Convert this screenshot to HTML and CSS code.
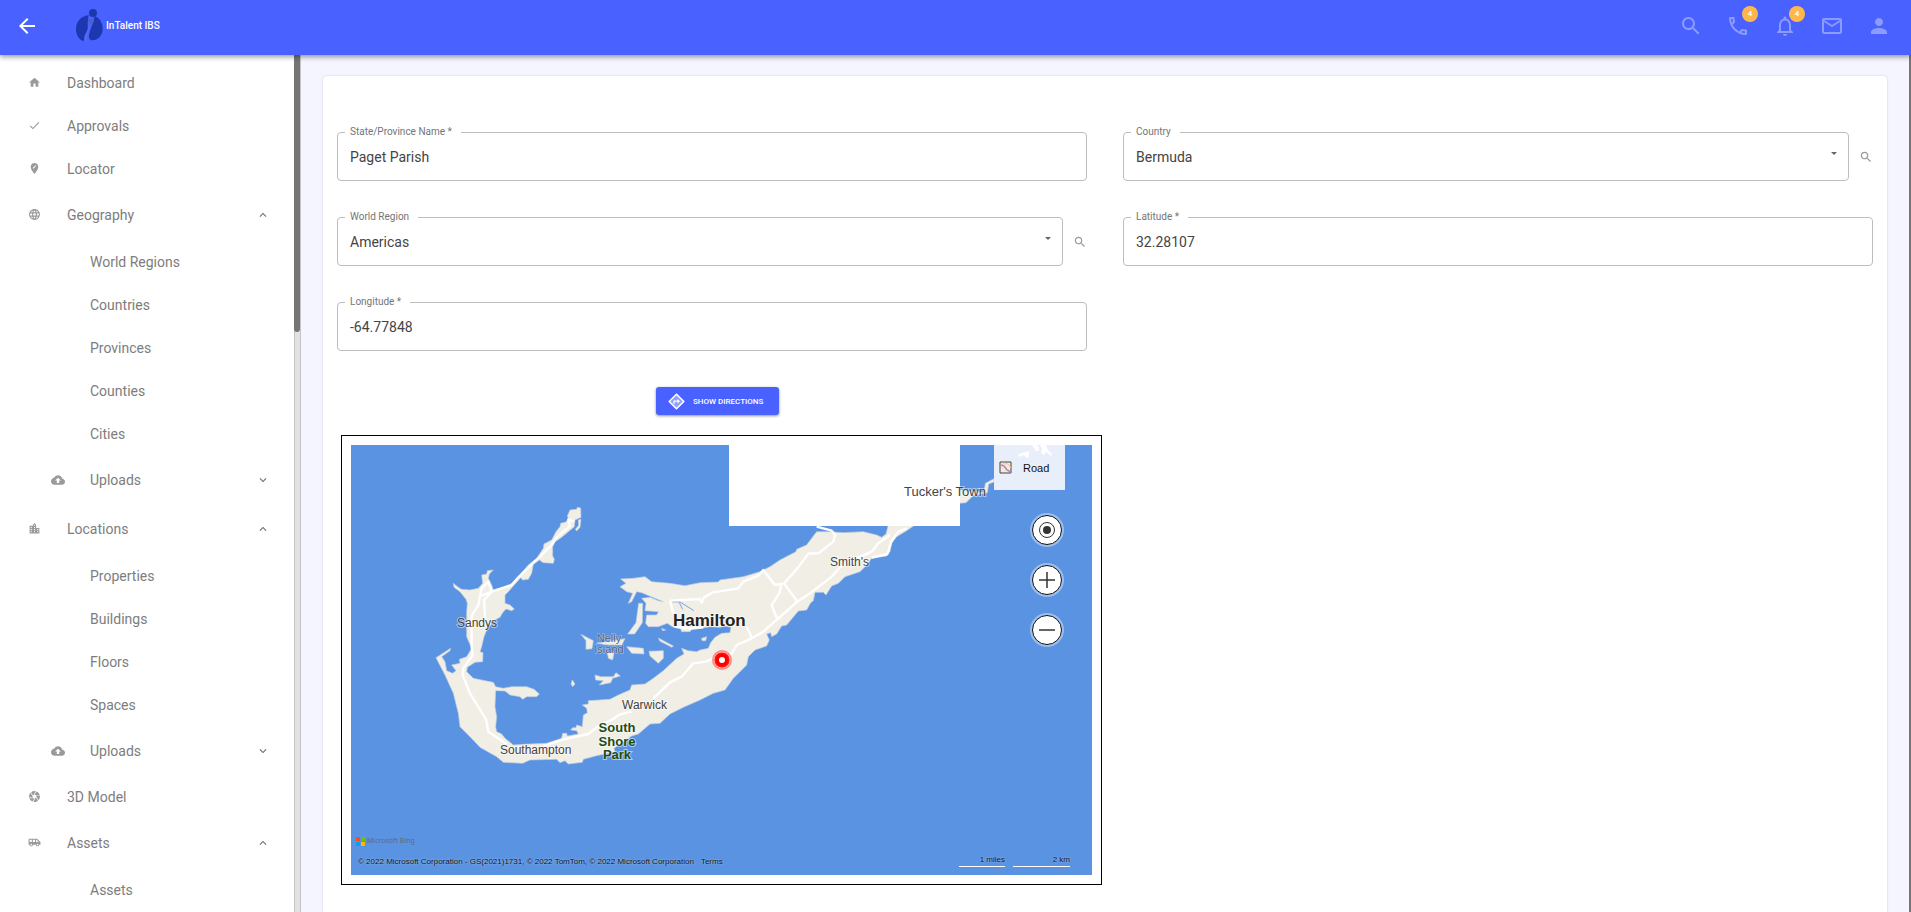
FILE: index.html
```html
<!DOCTYPE html>
<html lang="en">
<head>
<meta charset="utf-8">
<title>InTalent IBS</title>
<link rel="stylesheet" href="styles.css">
</head>
<body>
<svg class="sprite" aria-hidden="true">
  <symbol id="home" viewBox="0 0 24 24"><path d="M10 20v-6h4v6h5v-8h3L12 3 2 12h3v8z"/></symbol>
  <symbol id="check" viewBox="0 0 24 24"><path d="M9 16.17L4.83 12l-1.42 1.41L9 19 21 7l-1.41-1.41z"/></symbol>
  <symbol id="pin" viewBox="0 0 24 24"><path d="M12 2C8.14 2 5 5.14 5 9c0 5.25 7 13 7 13s7-7.75 7-13c0-3.86-3.14-7-7-7zm-1.56 10H9v-1.44l3.35-3.34 1.43 1.43L10.44 12zm4.45-4.45l-.7.7-1.44-1.44.7-.7c.15-.15.39-.15.54 0l.9.9c.15.15.15.39 0 .54z"/></symbol>
  <symbol id="globe" viewBox="0 0 24 24"><path d="M11.99 2C6.47 2 2 6.48 2 12s4.47 10 9.99 10C17.52 22 22 17.52 22 12S17.52 2 11.99 2zm6.93 6h-2.95c-.32-1.25-.78-2.45-1.38-3.56 1.84.63 3.37 1.91 4.33 3.56zM12 4.04c.83 1.2 1.48 2.53 1.91 3.96h-3.82c.43-1.43 1.08-2.76 1.91-3.96zM4.26 14C4.1 13.36 4 12.69 4 12s.1-1.36.26-2h3.38c-.08.66-.14 1.32-.14 2 0 .68.06 1.34.14 2H4.26zm.82 2h2.95c.32 1.25.78 2.45 1.38 3.56-1.84-.63-3.37-1.9-4.33-3.56zm2.95-8H5.08c.96-1.66 2.49-2.93 4.33-3.56C8.81 5.55 8.35 6.75 8.03 8zM12 19.96c-.83-1.2-1.48-2.53-1.91-3.96h3.82c-.43 1.43-1.08 2.76-1.91 3.96zM14.34 14H9.66c-.09-.66-.16-1.32-.16-2 0-.68.07-1.35.16-2h4.68c.09.65.16 1.32.16 2 0 .68-.07 1.34-.16 2zm.25 5.56c.6-1.11 1.06-2.31 1.38-3.56h2.95c-.96 1.65-2.49 2.93-4.33 3.56zM16.36 14c.08-.66.14-1.32.14-2 0-.68-.06-1.34-.14-2h3.38c.16.64.26 1.31.26 2s-.1 1.36-.26 2h-3.38z"/></symbol>
  <symbol id="cloud" viewBox="0 0 24 24"><path d="M19.35 10.04C18.67 6.59 15.64 4 12 4 9.11 4 6.6 5.64 5.35 8.04 2.34 8.36 0 10.91 0 14c0 3.31 2.69 6 6 6h13c2.76 0 5-2.24 5-5 0-2.64-2.05-4.78-4.65-4.96zM14 13v4h-4v-4H7l5-5 5 5h-3z"/></symbol>
  <symbol id="city" viewBox="0 0 24 24"><path d="M15 11V5l-3-3-3 3v2H3v14h18V11h-6zm-8 8H5v-2h2v2zm0-4H5v-2h2v2zm0-4H5V9h2v2zm6 8h-2v-2h2v2zm0-4h-2v-2h2v2zm0-4h-2V9h2v2zm0-4h-2V5h2v2zm6 12h-2v-2h2v2zm0-4h-2v-2h2v2z"/></symbol>
  <symbol id="camera" viewBox="0 0 24 24"><path d="M9.4 10.5l4.77-8.26C13.47 2.09 12.75 2 12 2c-2.4 0-4.6.85-6.32 2.25l3.66 6.35.06-.1zM21.54 9c-.92-2.92-3.15-5.26-6-6.34L11.88 9h9.66zm.26 1h-7.49l.29.5 4.76 8.25C21 16.97 22 14.61 22 12c0-.69-.07-1.35-.2-2zM8.54 12l-3.9-6.75C3.01 7.03 2 9.39 2 12c0 .69.07 1.35.2 2h7.49l-1.15-2zm-6.08 3c.92 2.92 3.15 5.26 6 6.34L12.12 15H2.46zm11.27 0l-3.9 6.76c.7.15 1.42.24 2.17.24 2.4 0 4.6-.85 6.32-2.25l-3.66-6.35-.93 1.6z"/></symbol>
  <symbol id="shuttle" viewBox="0 0 24 24"><path d="M17 5H3c-1.1 0-2 .89-2 2v9h2c0 1.65 1.34 3 3 3s3-1.35 3-3h5.5c0 1.65 1.34 3 3 3s3-1.35 3-3H23v-5l-6-6zM3 11V7h4v4H3zm3 6.5c-.83 0-1.5-.67-1.5-1.5s.67-1.5 1.5-1.5 1.5.67 1.5 1.5-.67 1.5-1.5 1.5zm7-6.5H9V7h4v4zm4.5 6.5c-.83 0-1.5-.67-1.5-1.5s.67-1.5 1.5-1.5 1.5.67 1.5 1.5-.67 1.5-1.5 1.5zM15 11V7h1l4 4h-5z"/></symbol>
  <symbol id="less" viewBox="0 0 24 24"><path d="M12 8l-6 6 1.41 1.41L12 10.83l4.59 4.58L18 14z"/></symbol>
  <symbol id="more" viewBox="0 0 24 24"><path d="M16.59 8.59L12 13.17 7.41 8.59 6 10l6 6 6-6z"/></symbol>
  <symbol id="search" viewBox="0 0 24 24"><path d="M15.5 14h-.79l-.28-.27C15.41 12.59 16 11.11 16 9.5 16 5.91 13.09 3 9.5 3S3 5.91 3 9.5 5.91 16 9.5 16c1.61 0 3.09-.59 4.23-1.57l.27.28v.79l5 4.99L20.49 19l-4.99-5zm-6 0C7.01 14 5 11.99 5 9.5S7.01 5 9.5 5 14 7.01 14 9.5 11.99 14 9.5 14z"/></symbol>
  <symbol id="phone" viewBox="0 0 24 24"><path d="M6.54 5c.06.89.21 1.76.45 2.59l-1.2 1.2c-.41-1.2-.67-2.47-.76-3.79h1.51m9.86 12.02c.85.24 1.72.39 2.6.45v1.49c-1.32-.09-2.59-.35-3.8-.75l1.2-1.19M7.5 3H4c-.55 0-1 .45-1 1 0 9.39 7.61 17 17 17 .55 0 1-.45 1-1v-3.49c0-.55-.45-1-1-1-1.24 0-2.45-.2-3.57-.57-.1-.04-.21-.05-.31-.05-.26 0-.51.1-.71.29l-2.2 2.2c-2.83-1.45-5.15-3.76-6.59-6.59l2.2-2.2c.28-.28.36-.67.25-1.02C8.7 6.45 8.5 5.25 8.5 4c0-.55-.45-1-1-1z"/></symbol>
  <symbol id="bell" viewBox="0 0 24 24"><path d="M12 22c1.1 0 2-.9 2-2h-4c0 1.1.9 2 2 2zm6-6v-5c0-3.07-1.63-5.64-4.5-6.32V4c0-.83-.67-1.5-1.5-1.5s-1.5.67-1.5 1.5v.68C7.64 5.36 6 7.92 6 11v5l-2 2v1h16v-1l-2-2zm-2 1H8v-6c0-2.48 1.51-4.5 4-4.5s4 2.02 4 4.5v6z"/></symbol>
  <symbol id="mail" viewBox="0 0 24 24"><path d="M22 6c0-1.1-.9-2-2-2H4c-1.1 0-2 .9-2 2v12c0 1.1.9 2 2 2h16c1.1 0 2-.9 2-2V6zm-2 0l-8 5-8-5h16zm0 12H4V8l8 5 8-5v10z"/></symbol>
  <symbol id="person" viewBox="0 0 24 24"><path d="M12 12c2.21 0 4-1.79 4-4s-1.79-4-4-4-4 1.79-4 4 1.79 4 4 4zm0 2c-2.67 0-8 1.34-8 4v2h16v-2c0-2.66-5.33-4-8-4z"/></symbol>
  <symbol id="back" viewBox="0 0 24 24"><path d="M20 11H7.83l5.59-5.59L12 4l-8 8 8 8 1.41-1.41L7.83 13H20v-2z"/></symbol>
</svg>

<header class="topbar">
  <button class="icon-btn back" type="button" aria-label="Back"><svg><use href="#back"/></svg></button>
  <a class="brand" href="#">
    <svg class="logo" viewBox="0 0 81 99" aria-hidden="true">
      <circle cx="51" cy="12" r="12" fill="#1c37b0"/>
      <path d="M38 18C14 22 0 38 0 60c0 18 9 31 22 37 6-12 12-22 13-34 1-12-1-20 1-32z" fill="#1c37b0"/>
      <path d="M55 21c16 5 25 20 25 38 0 20-13 34-31 35-10-1-12-10-9-20 4-18 13-30 15-53z" fill="#1c37b0"/>
      <path d="M36 31h19c-2 8-5 14-8 18-4-4-8-8-11-18z" fill="#5261b8"/>
      <path d="M36 48c3 15-8 25-11 36-1 6 2 10 8 15-1-8-3-16 1-24 5-9 6-18 2-27z" fill="#5a6ff0"/>
    </svg>
    <span>InTalent IBS</span>
  </a>
  <nav class="tools" aria-label="Tools">
    <button class="icon-btn" type="button" aria-label="Search"><svg><use href="#search"/></svg></button>
    <button class="icon-btn" type="button" aria-label="Calls"><svg><use href="#phone"/></svg><span class="badge">4</span></button>
    <button class="icon-btn" type="button" aria-label="Notifications"><svg><use href="#bell"/></svg><span class="badge">4</span></button>
    <button class="icon-btn" type="button" aria-label="Mail"><svg><use href="#mail"/></svg></button>
    <button class="icon-btn" type="button" aria-label="Account"><svg><use href="#person"/></svg></button>
  </nav>
</header>

<div class="shell">
  <div class="sidebar">
    <nav class="menu" aria-label="Main">
      <a class="item" href="#"><svg class="ico"><use href="#home"/></svg>Dashboard</a>
      <a class="item" href="#"><svg class="ico"><use href="#check"/></svg>Approvals</a>
      <a class="item" href="#"><svg class="ico"><use href="#pin"/></svg>Locator</a>
      <button class="item group" type="button" aria-expanded="true"><svg class="ico"><use href="#globe"/></svg>Geography<svg class="chev"><use href="#less"/></svg></button>
      <div class="sub">
        <a class="item" href="#">World Regions</a>
        <a class="item" href="#">Countries</a>
        <a class="item" href="#">Provinces</a>
        <a class="item" href="#">Counties</a>
        <a class="item" href="#">Cities</a>
        <button class="item group" type="button" aria-expanded="false"><svg class="ico"><use href="#cloud"/></svg>Uploads<svg class="chev"><use href="#more"/></svg></button>
      </div>
      <button class="item group" type="button" aria-expanded="true"><svg class="ico"><use href="#city"/></svg>Locations<svg class="chev"><use href="#less"/></svg></button>
      <div class="sub">
        <a class="item" href="#">Properties</a>
        <a class="item" href="#">Buildings</a>
        <a class="item" href="#">Floors</a>
        <a class="item" href="#">Spaces</a>
        <button class="item group" type="button" aria-expanded="false"><svg class="ico"><use href="#cloud"/></svg>Uploads<svg class="chev"><use href="#more"/></svg></button>
      </div>
      <a class="item" href="#"><svg class="ico"><use href="#camera"/></svg>3D Model</a>
      <button class="item group" type="button" aria-expanded="true"><svg class="ico"><use href="#shuttle"/></svg>Assets<svg class="chev"><use href="#less"/></svg></button>
      <div class="sub">
        <a class="item" href="#">Assets</a>
      </div>
    </nav>
    <div class="track"><div class="thumb"></div></div>
  </div>

  <main class="content">
    <form class="card">
      <div class="fields">
        <div class="row"><div class="field"><input id="state" value="Paget Parish"><label for="state">State/Province Name *</label></div></div>
        <div class="row">
          <div class="field"><select id="country"><option>Bermuda</option></select><label for="country">Country</label><svg class="caret" viewBox="0 0 6 3"><path d="M0 0h6L3 3z"/></svg></div>
          <button class="lookup" type="button" aria-label="Look up country"><svg><use href="#search"/></svg></button>
        </div>
        <div class="row">
          <div class="field"><select id="region"><option>Americas</option></select><label for="region">World Region</label><svg class="caret" viewBox="0 0 6 3"><path d="M0 0h6L3 3z"/></svg></div>
          <button class="lookup" type="button" aria-label="Look up world region"><svg><use href="#search"/></svg></button>
        </div>
        <div class="row"><div class="field"><input id="lat" value="32.28107"><label for="lat">Latitude *</label></div></div>
        <div class="row"><div class="field"><input id="lng" value="-64.77848"><label for="lng">Longitude *</label></div></div>
      </div>

      <section class="map-panel">
        <div class="actions">
          <button class="directions" type="button">
            <svg viewBox="0 0 17 17" aria-hidden="true"><path d="M8.500 1.200 15.800 8.500 8.500 15.800 1.200 8.500z" fill="#8f9eff" stroke="#fff" stroke-width="1.600" stroke-linejoin="round"/><path d="M6 11V8.200h4" fill="none" stroke="#fff" stroke-width="1.200"/><path d="M9.500 6 12 8.200 9.500 10.400z" fill="#fff"/></svg>
            SHOW DIRECTIONS
          </button>
        </div>
        <div class="frame">
          <div class="map">
            <svg class="chart" viewBox="0 0 741 430" preserveAspectRatio="xMidYMid slice" role="img" aria-label="Map of Bermuda">
              <g transform="scale(.33333) translate(-63 -45)">
                <g fill="#f1eee6" stroke="#c3cfdd" stroke-width="2" stroke-linejoin="round">
                  <path d="M370 460 385 472 395 478 420 480 445 475 458 460 455 435 470 432 472 422 490 420 478 432 475 445 485 465 490 480 520 472 540 464 560 448 575 430 595 405 620 385 640 355 642 342 665 330 678 305 690 290 692 280 708 276 715 265 712 258 720 240 740 238 742 232 752 234 753 262 735 270 733 290 715 305 692 324 675 335 668 350 668 378 673 388 670 400 640 398 628 390 610 403 605 430 595 448 578 450 572 443 550 468 535 485 525 495 525 520 540 525 553 537 545 542 528 537 518 548 510 562 488 573 470 600 462 620 455 650 450 665 459 668 458 695 435 697 412 712 410 725 430 745 465 752 490 757 497 770 520 775 545 770 590 770 612 778 628 792 620 800 590 800 578 808 570 800 540 795 525 783 497 782 495 830 500 860 497 890 500 905 515 912 525 925 550 945 600 942 650 940 695 925 698 910 710 910 712 918 745 912 740 902 722 900 728 893 738 893 740 885 757 890 760 855 772 848 770 835 757 825 775 822 775 812 840 808 865 795 900 780 905 765 945 762 970 745 1000 722 1040 685 1062 672 1055 655 1075 662 1100 665 1110 660 1135 655 1142 638 1155 622 1175 610 1200 608 1203 592 1185 588 1170 592 1140 590 1110 595 1085 598 1080 605 1055 605 1052 596 1030 592 1012 580 985 590 955 590 947 580 950 555 980 555 985 545 945 542 948 520 935 505 960 502 985 512 1000 515 935 488 920 485 905 515 895 520 908 490 890 485 870 470 888 460 872 447 910 445 945 440 965 455 1020 460 1065 467 1110 458 1165 456 1170 450 1240 440 1290 425 1320 410 1350 390 1398 365 1400 358 1430 345 1445 325 1460 305 1495 305 1540 308 1600 305 1640 315 1655 322 1668 312 1675 285 1755 285 1725 305 1700 320 1685 340 1680 365 1670 378 1625 385 1605 410 1590 425 1545 440 1525 460 1505 468 1488 495 1480 487 1455 487 1450 512 1442 518 1430 540 1405 543 1370 585 1355 588 1340 612 1325 620 1322 608 1310 612 1318 630 1310 648 1275 660 1255 680 1250 705 1230 725 1210 745 1185 780 1150 790 1110 810 1060 832 1020 852 990 880 960 882 925 912 905 918 880 935 852 955 855 965 800 977 760 988 757 997 715 1002 705 992 690 998 680 988 600 990 578 1000 520 997 500 980 450 952 420 920 390 890 385 850 370 790 345 735 318 683 362 655 360 662 335 680 345 695 350 722 368 730 378 722 365 705 390 700 388 688 410 680 425 655 410 620 410 545 412 520 408 508 390 485 372 472z"/>
                  <path d="M745 270 753 268 750 292 740 303 736 298 746 286zM926 520 938 520 937 578 914 612 893 612 918 578zM753 613 790 632 786 656 768 658 768 632zM800 640 885 626 875 645 835 645zM832 668 852 668 848 690 835 685zM890 650 940 655 942 672 905 670zM957 664 1000 662 1000 685 985 700 960 678zM985 624 1030 648 1026 652 990 634zM795 735 812 740 850 740 858 728 871 738 848 745 842 758 808 765 820 752 797 750zM727 750 735 762 728 770 723 762zM1115 625 1130 620 1127 632 1116 632zM995 595 1007 600 998 602z"/>
                  <path d="M1888 180 1962 188 1966 160 1992 146 1992 156 1976 162 1972 188 1930 196 1908 218 1888 220z"/>
                </g>
                <path d="M1020 515 1050 516 1092 542M1048 518 1058 538" fill="none" stroke="#7ba5dc" stroke-width="3"/>
                <path class="roads" d="M733 275 715 268 720 288 680 322 665 345 630 380 595 412 565 442 545 465 485 485 462 510 466 575M485 485 475 455 455 475 445 525 425 558 425 650 428 675 400 715 398 735 420 790 468 868 475 905 530 942M455 497 485 485M640 948 700 928 775 912 810 885 845 870 870 853 905 845M970 805 1020 757 1055 740 1090 700 1128 695 1160 680M1020 512 1110 507 1115 518 1122 502 1150 487 1225 475 1240 455 1285 437 1300 420 1335 465 1362 460 1400 418 1436 370 1465 370 1510 335 1516 315 1505 302 1460 290M1020 512 1030 550M1035 590 1080 596 1120 592M1362 460 1402 515 1342 568 1325 525 1348 490 1354 462M1180 695 1205 670 1220 645 1265 625 1300 605 1402 515 1440 490 1505 440 1530 412 1580 385 1625 365 1645 340 1680 315M1265 622 1250 590M1625 383 1672 372 1685 332 1705 305 1730 295"/>
                <path d="M1197 45h693v243h-693z" fill="#fff"/>
              </g>
              <g class="places">
                <text x="106" y="182">Sandys</text>
                <text x="479" y="121">Smith's</text>
                <text x="553" y="51" class="town">Tucker's Town</text>
                <text x="271" y="264">Warwick</text>
                <text x="149" y="309">Southampton</text>
                <g class="islet"><text x="258" y="197">Nelly</text><text x="258" y="208">Island</text></g>
                <text x="322" y="181" class="city">Hamilton</text>
                <g class="park"><text x="266" y="287">South</text><text x="266" y="301">Shore</text><text x="266" y="314">Park</text></g>
              </g>
              <circle cx="371" cy="215" r="10" fill="#ff8a80"/><circle cx="371" cy="215" r="8" fill="#ff1010" stroke="#ffb0a8"/><circle cx="371" cy="215" r="6" fill="#ff0000"/><circle cx="371" cy="215" r="3" fill="#fff"/>
            </svg>
            <div class="controls">
              <button class="style-btn" type="button">
                <svg class="surf" viewBox="0 0 71 13" aria-hidden="true"><path d="M25 9l10-3v6l-3 1-2-3-6 2zM38 0h4l3 2v4h-3zM46 0h6l2 5 4 4-1 2-5-4-2 3-3-2 1-4z" fill="#fff"/></svg>
                <svg class="tile" viewBox="0 0 13 13" aria-hidden="true"><path d="M1 1h11v11H1z" fill="#f3ead9" stroke="#444"/><path d="M2 4l3 1 3 4 4 2" fill="none" stroke="#b57fc9" stroke-width="1.500"/><path d="M4 2l5 1 3 4M5 5l2-3" fill="none" stroke="#f2c79a"/></svg>
                <span>Road</span>
              </button>
              <button class="round" type="button" aria-label="Locate me"><svg viewBox="0 0 28 28"><circle cx="14" cy="14" r="7.500" fill="none" stroke="#333"/><circle cx="14" cy="14" r="4" fill="#333"/></svg></button>
              <button class="round" type="button" aria-label="Zoom in"><svg viewBox="0 0 28 28"><path d="M6 14h16M14 6v16" stroke="#333" stroke-width="1.500"/></svg></button>
              <button class="round" type="button" aria-label="Zoom out"><svg viewBox="0 0 28 28"><path d="M6 14h16" stroke="#333" stroke-width="1.500"/></svg></button>
            </div>
            <div class="legal">
              <div class="bing"><svg viewBox="0 0 9 9" aria-hidden="true"><path d="M0 0h4v4H0z" fill="#f25022"/><path d="M5 0h4v4H5z" fill="#7fba00"/><path d="M0 5h4v4H0z" fill="#00a4ef"/><path d="M5 5h4v4H5z" fill="#ffb900"/></svg>Microsoft Bing</div>
              <div class="copy"><span>© 2022 Microsoft Corporation - GS(2021)1731, © 2022 TomTom, © 2022 Microsoft Corporation</span><a href="#">Terms</a></div>
            </div>
            <div class="scale"><span class="miles">1 miles</span><span class="km">2 km</span></div>
          </div>
        </div>
      </section>
    </form>
  </main>
  <div class="page-scroll"></div>
</div>
</body>
</html>
```
FILE: styles.css
```css
* { box-sizing: border-box; }

body {
  margin: 0;
  height: 100vh;
  overflow: hidden;
  display: flex;
  flex-direction: column;
  font-family: Roboto, sans-serif;
  font-size: 14px;
  color: #444;
  background: #f5f5ff;
}

button, input, select { font: inherit; color: inherit; }
button { border: 0; background: none; padding: 0; cursor: pointer; }
a { color: inherit; text-decoration: none; }
svg { display: block; fill: currentColor; }
.sprite { position: absolute; width: 0; height: 0; }

/* Top bar */
.topbar {
  position: relative;
  z-index: 2;
  flex: none;
  display: flex;
  align-items: center;
  height: 55px;
  padding: 0 20px 4px 15px;
  background: #4962ff;
  color: #fff;
  box-shadow: 0 2px 5px rgba(0, 0, 0, .4);
}
.icon-btn { position: relative; width: 24px; height: 24px; }
.icon-btn svg { width: 24px; height: 24px; }
.brand {
  display: flex;
  align-items: center;
  gap: 3px;
  margin-left: 37px;
  font-size: 10px;
  font-weight: 500;
}
.logo { width: 27px; height: 33px; }
.tools { display: flex; gap: 23px; margin-left: auto; }
.tools .icon-btn > svg { opacity: .36; }
.badge {
  position: absolute;
  top: -8px;
  right: -8px;
  width: 16px;
  height: 16px;
  border-radius: 50%;
  background: #ffb74d;
  font-size: 8px;
  font-weight: 500;
  line-height: 16px;
  text-align: center;
}

/* Layout */
.shell { flex: 1; min-height: 0; display: flex; }
.sidebar { flex: none; width: 301px; display: flex; background: #fff; overflow: hidden; }
.menu { flex: 1; padding-top: 6px; color: #7d7d7d; }
.track { width: 7px; background: #e2e2e2; border-right: 1px solid #c4c4c4; border-left: 1px solid #c4c4c4; }
.thumb { width: 6px; height: 277px; margin-left: -1px; border-radius: 0 0 3px 3px; background: #757575; }
.content { flex: 1; min-width: 0; padding: 21px 22px 0; }
.page-scroll { flex: none; width: 2px; background: #757575; }

/* Menu */
.item {
  display: flex;
  align-items: center;
  width: 100%;
  height: 43px;
  padding-left: 28px;
  text-align: left;
}
.group { height: 49px; }
.ico { width: 13px; height: 13px; margin-right: 26px; color: #9a9a9a; }
.chev { width: 14px; height: 14px; margin: 0 24px 0 auto; color: #707070; }
.sub { padding-top: 1px; }
.sub .item { padding-left: 90px; }
.sub .group { padding-left: 51px; }
.sub .ico { width: 14px; height: 14px; margin-right: 25px; }

/* Form */
.card {
  height: 100%;
  overflow: hidden;
  padding: 56px 14px 0;
  border-radius: 4px 4px 0 0;
  background: #fff;
  box-shadow: 0 0 2px rgba(0, 0, 0, .2);
}
.fields { display: grid; grid-template-columns: 1fr 1fr; gap: 36px; }
.row { display: flex; }
.field { position: relative; flex: 1; }
.field input, .field select {
  display: block;
  width: 100%;
  height: 49px;
  padding: 0 12px;
  border: 1px solid #bdbdbd;
  border-radius: 4px;
  background: #fff;
  appearance: none;
  outline: 0;
}
.field label {
  position: absolute;
  top: -6px;
  left: 8px;
  padding: 0 9px 0 5px;
  background: #fff;
  color: #757575;
  font-size: 10px;
  line-height: 12px;
}
.caret { position: absolute; top: 20px; right: 12px; width: 6px; height: 3px; color: #666; }
.lookup { display: flex; align-items: center; justify-content: flex-end; width: 24px; color: #999; }
.lookup svg { width: 14px; height: 14px; }

/* Map */
.map-panel { width: calc(50% - 3px); margin-top: 36px; }
.actions { display: flex; justify-content: center; padding-right: 4px; }
.directions {
  display: flex;
  align-items: center;
  gap: 8px;
  min-width: 123px;
  height: 28px;
  padding: 0 12px;
  border-radius: 3px;
  background: #4962ff;
  color: #fff;
  font-size: 8px;
  font-weight: 500;
  box-shadow: 0 1px 3px rgba(0, 0, 0, .45);
}
.directions svg { width: 17px; height: 17px; }
.frame { margin: 20px 0 0 4px; padding: 9px; border: 1px solid #000; }
.map {
  position: relative;
  height: 430px;
  overflow: hidden;
  background: #5a93e2;
  font-family: "Liberation Sans", Arial, sans-serif;
}
.chart { width: 100%; height: 100%; }
.roads { fill: none; stroke: #fff; stroke-width: 7px; stroke-linejoin: round; }
.places {
  font-size: 12px;
  fill: #45423d;
  stroke: rgba(255, 255, 255, .5);
  stroke-width: 2px;
  paint-order: stroke;
}
.places .town { font-size: 13px; }
.places .islet { font-size: 11px; fill: #566070; stroke-width: 1px; text-anchor: middle; }
.places .city { font-size: 17px; font-weight: 700; fill: #222; }
.places .park { font-size: 13px; font-weight: 700; fill: #1d4d12; text-anchor: middle; }

.controls {
  position: absolute;
  top: 0;
  right: 27px;
  display: flex;
  flex-direction: column;
  align-items: flex-end;
  gap: 20px;
}
.style-btn {
  position: relative;
  display: flex;
  align-items: center;
  gap: 11px;
  width: 71px;
  height: 45px;
  margin-bottom: 5px;
  padding-left: 5px;
  background: #e8effb;
  color: #111;
  font-size: 11px;
}
.surf { position: absolute; top: 0; left: 0; width: 71px; height: 13px; }
.tile { width: 13px; height: 13px; }
.round {
  width: 30px;
  height: 30px;
  margin-right: 3px;
  border: 1px solid #111;
  border-radius: 50%;
  background: #fff;
  box-shadow: 0 0 0 2px rgba(255, 255, 255, .4);
}
.round svg { width: 28px; height: 28px; }

.legal { position: absolute; left: 5px; bottom: 7px; font-size: 8px; color: #111; }
.bing {
  display: flex;
  align-items: center;
  gap: 2px;
  margin-bottom: 10px;
  color: #5f6b7d;
  font-family: "Noto Sans", sans-serif;
  font-size: 7px;
  line-height: 10px;
}
.bing svg { width: 9px; height: 9px; }
.copy { display: flex; gap: 7px; padding-left: 2px; line-height: 12px; text-shadow: 0 0 2px rgba(255, 255, 255, .6); }
.scale {
  position: absolute;
  right: 22px;
  bottom: 8px;
  display: flex;
  gap: 8px;
  color: #111;
  font-size: 8px;
  line-height: 12px;
  text-align: right;
  text-shadow: 0 0 2px rgba(255, 255, 255, .6);
}
.scale span { border: solid #fff; border-width: 0 0 1px; }
.miles { width: 46px; }
.km { width: 57px; }
```
